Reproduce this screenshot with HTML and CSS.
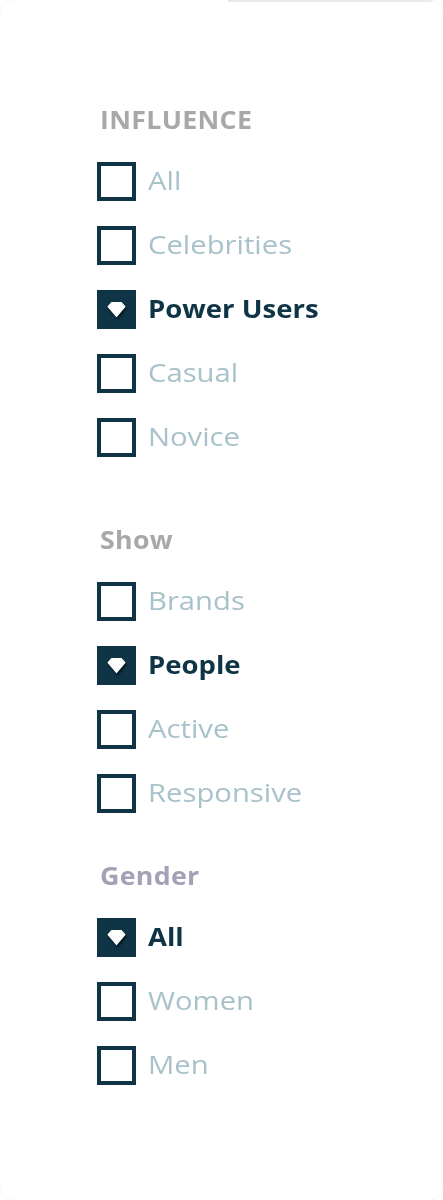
FILE: index.html
```html
<!DOCTYPE html>
<html>
<head>
<meta charset="utf-8">
<link rel="stylesheet" href="styles.css">
</head>
<body>
<div class="card">
  <div class="topbar"></div>
  <div class="filters">
    <section class="group group-first">
      <h2 class="title">INFLUENCE</h2>
      <ul class="list">
        <li class="item"><span class="box"></span><span class="label">All</span></li>
        <li class="item"><span class="box"></span><span class="label">Celebrities</span></li>
        <li class="item checked"><span class="box"><svg class="gem" viewBox="0 0 16 14"><path d="M4 1.2 H12 L15 4.6 L8 12.8 L1 4.6 Z"/></svg></span><span class="label">Power Users</span></li>
        <li class="item"><span class="box"></span><span class="label">Casual</span></li>
        <li class="item"><span class="box"></span><span class="label">Novice</span></li>
      </ul>
    </section>
    <section class="group group-show">
      <h2 class="title">Show</h2>
      <ul class="list">
        <li class="item"><span class="box"></span><span class="label">Brands</span></li>
        <li class="item checked"><span class="box"><svg class="gem" viewBox="0 0 16 14"><path d="M4 1.2 H12 L15 4.6 L8 12.8 L1 4.6 Z"/></svg></span><span class="label">People</span></li>
        <li class="item"><span class="box"></span><span class="label">Active</span></li>
        <li class="item"><span class="box"></span><span class="label">Responsive</span></li>
      </ul>
    </section>
    <section class="group group-gender">
      <h2 class="title title-gender">Gender</h2>
      <ul class="list">
        <li class="item checked"><span class="box"><svg class="gem" viewBox="0 0 16 14"><path d="M4 1.2 H12 L15 4.6 L8 12.8 L1 4.6 Z"/></svg></span><span class="label">All</span></li>
        <li class="item"><span class="box"></span><span class="label">Women</span></li>
        <li class="item"><span class="box"></span><span class="label">Men</span></li>
      </ul>
    </section>
  </div>
</div>
</body>
</html>
```
FILE: styles.css
```css
* { box-sizing: border-box; }
html, body { margin: 0; padding: 0; background: #ffffff; }
body { font-family: "Open Sans", "DejaVu Sans", sans-serif; }
.card {
  width: 443px;
  height: 1200px;
  border-radius: 16px;
  box-shadow: 0 0 2px rgba(0,0,0,0.10);
  overflow: hidden;
  background: #fff;
}
.topbar {
  margin-left: 228px;
  margin-right: 10px;
  height: 2px;
  background: #e9e9e9;
}
.filters {
  padding-left: 97px;
  padding-top: 100px;
}
.group-show { margin-top: 65px; }
.group-gender { margin-top: 45px; }
.title {
  margin: 0 0 26px 3px;
  font-size: 25px;
  line-height: 34px;
  font-weight: 700;
  letter-spacing: 0.3px;
  color: #a8a8a8;
  transform: scaleX(1.07);
  transform-origin: left center;
}
.title-gender { color: #a3a1b6; }
.list {
  list-style: none;
  margin: 0;
  padding: 0;
  display: flex;
  flex-direction: column;
  gap: 25px;
}
.item {
  display: flex;
  align-items: center;
  gap: 12px;
  height: 39px;
}
.box {
  width: 39px;
  height: 39px;
  border: 4px solid #0e3446;
  display: flex;
  align-items: center;
  justify-content: center;
  flex: none;
}
.checked .box { background: #0e3446; }
.gem {
  width: 19px;
  height: 17px;
  fill: #ffffff;
  stroke: #ffffff;
  stroke-width: 1.2;
  stroke-linejoin: round;
  filter: drop-shadow(1px 2px 1px rgba(0,0,0,0.6));
}
.label {
  display: inline-block;
  margin-top: -4px;
  font-size: 25px;
  line-height: 34px;
  color: #a7c2ca;
  transform: scaleX(1.17);
  transform-origin: left center;
}
.checked .label {
  font-weight: 700;
  color: #0e3446;
  transform: scaleX(1.1);
}
```
